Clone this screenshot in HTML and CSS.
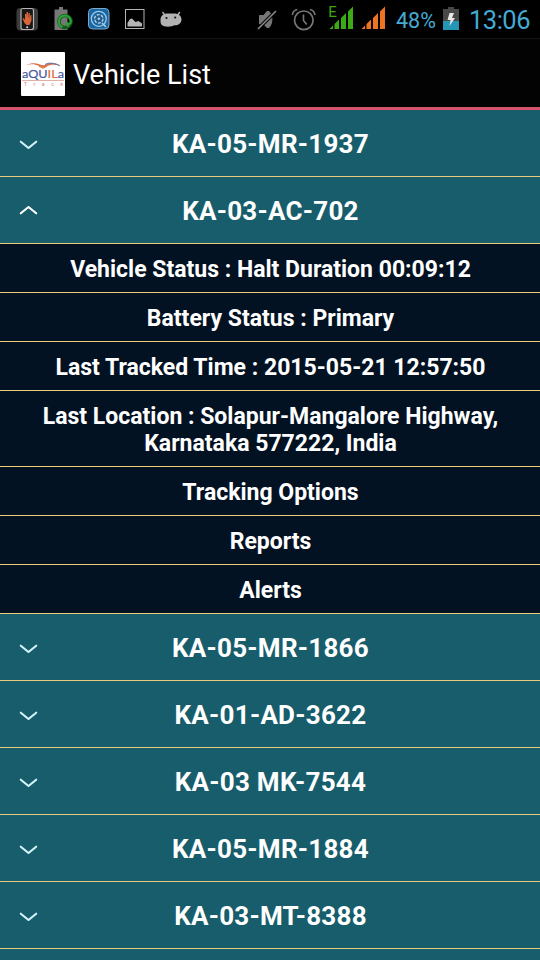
FILE: index.html
```html
<!DOCTYPE html>
<html lang="en">
<head>
<meta charset="utf-8">
<title>Vehicle List</title>
<link rel="stylesheet" href="styles.css">
</head>
<body>
<svg class="defs" width="0" height="0"><defs>
<symbol id="down" viewBox="0 0 20 12"><path d="M2.800 2.700 10.500 9l7.700-6.300" fill="none" stroke="currentColor" stroke-width="2.100" stroke-linecap="round" stroke-linejoin="round"/></symbol>
</defs></svg>
<div class="status">
  <svg class="icons" width="190" height="38" viewBox="0 0 190 38">
    <rect x="16.500" y="8" width="21.500" height="22.500" rx="4" fill="#3c3c3c"/>
    <rect x="21" y="8.500" width="12.500" height="21" rx="2" fill="#181818" stroke="#b5b5b5" stroke-width="1.200"/>
    <path d="M24.500 23 22.500 18.500l1-.5 1.500 2v-6h1.300v4l.3-6h1.400v6l.6-5h1.300l-.2 5.500.8-3.500h1v5.500l-2 4.500h-3z" fill="#d76538"/>
    <circle cx="27.200" cy="27.200" r="1" fill="#ddd"/>
    <path d="M59 7h4v2.500h4.500v20.500h-13V9.500H59z" fill="#777"/>
    <circle cx="65" cy="21.500" r="6" fill="none" stroke="#125c1b" stroke-width="3.500"/>
    <path d="M62.500 27a6 6 0 1 1 8-3.500" fill="none" stroke="#2ba637" stroke-width="2"/>
    <path d="m65.500 22 2 5.500 3.500-4.500z" fill="#28a535"/>
    <rect x="88.500" y="8.500" width="20.500" height="20.500" rx="4" fill="#1767a5" stroke="#7da7c8"/>
    <circle cx="98.800" cy="18.800" r="7.500" fill="none" stroke="#a1c7df" stroke-width="1.300"/>
    <circle cx="98.800" cy="18.800" r="4.200" fill="#285b8b" stroke="#b5d1df" stroke-width="1.300" stroke-dasharray="3 1.300"/>
    <circle cx="98.800" cy="18.800" r="1.300" fill="#9dd3e7"/>
    <path d="m102 23 4 4" stroke="#add1e6" stroke-width="1.500"/>
    <rect x="125.500" y="9.500" width="18.500" height="19" fill="none" stroke="#b5b5b5"/>
    <path d="M127.500 26.500v-3.500l2.500-4 2-.5 3.500 3.500 3-1 3.500 2.500v3z" fill="#b5b5b5"/>
    <path d="m162.500 12 2.300 3M179.800 12l-2 3" stroke="#b2b2b2" stroke-width="1.400"/>
    <path d="M160.500 20c0-4 3-7 7-6.500h7.500c4 0 6.500 3 6.500 6 0 4-3.500 6-7 5.800-3 2-11 2-13-.5-1-1.300-1-3-1-4.800z" fill="#b2b2b2"/>
    <circle cx="166.500" cy="18" r="1.100" fill="#111"/><circle cx="175.200" cy="17.500" r="1.100" fill="#111"/>
  </svg>
  <svg class="icons signal" width="140" height="38" viewBox="250 0 140 38">
    <path d="M259.500 15.500h4l4-4.500v17l-4-4h-4zM268.500 11c4.500 4 4.500 13 0 17z" fill="#777" stroke="#777" stroke-width="1"/>
    <path d="m258 29 18-18" stroke="#000" stroke-width="3.500"/><path d="m258 29 18-18" stroke="#8a8a8a" stroke-width="1.600"/>
    <circle cx="303.800" cy="20.300" r="9.300" fill="none" stroke="#777" stroke-width="1.700"/>
    <path d="M303.500 14.500v6l3.200 4M292.300 15c.5-3 2.500-5 5-5.500M315 15c-.5-3-2.500-5-5-5.500" fill="none" stroke="#777" stroke-width="1.600"/>
    <text class="edge" x="328.300" y="17">E</text>
    <path d="M329.500 29h3.500v-3.500zM334.500 29h4.500v-9.500l-4.500 4.500zM341 29h5V13l-5 5zM348 29h5V6.500l-5 5z" fill="#3caa17"/>
    <path d="M361.500 29h3.500v-3.500zM366.500 29h4.500v-9.500l-4.500 4.500zM373 29h5V13l-5 5zM380 29h5V6.500l-5 5z" fill="#ee7424"/>
  </svg>
  <span class="percent">48%</span>
  <svg class="icons battery" width="18" height="38" viewBox="442 0 18 38">
    <path d="M448 7h6v2h5v21h-16V9h5z" fill="#484848"/><path d="M443 21h16v9h-16z" fill="#2596b6"/>
    <path d="m449.500 13-2 7h3l-1 6 5.500-8h-3l2-5z" fill="#e8e8e8"/>
  </svg>
  <span class="clock">13:06</span>
</div>
<header class="bar">
  <svg class="logo" width="44" height="44" viewBox="0 0 44 44">
    <rect width="44" height="44" rx="1" fill="#fff"/>
    <path d="M5 13c5-2 9-2.500 14-.5 2 1 4 1 6 0 4-2 9-2 14 1-6-1.500-10-1-14 1-3 1.500-5 1-7-.5-4-2-8-2-13-1z" fill="#d8704f"/>
    <path d="M24 12.500c4-2 9-2 15 1.500" fill="none" stroke="#6572a9" stroke-width="1"/>
    <path d="m18 14 4 2 4-2" fill="none" stroke="#e08055" stroke-width="1.500"/>
    <text class="brand" x="1" y="26" textLength="42" lengthAdjust="spacingAndGlyphs">aQU<tspan class="accent">IL</tspan>a</text>
    <path d="M1 28.500h42" stroke="#d99a92" stroke-width=".8"/>
    <text class="track" x="3" y="34" textLength="39">Track</text>
  </svg>
  <h1>Vehicle List</h1>
</header>
<main>
  <div class="row"><svg class="arrow"><use href="#down"/></svg><span>KA-05-MR-1937</span></div>
  <div class="row"><svg class="arrow up"><use href="#down"/></svg><span>KA-03-AC-702</span></div>
  <div class="item"><span>Vehicle Status : Halt Duration 00:09:12</span></div>
  <div class="item"><span>Battery Status : Primary</span></div>
  <div class="item"><span>Last Tracked Time : 2015-05-21 12:57:50</span></div>
  <div class="item"><span>Last Location : Solapur-Mangalore Highway,<br>Karnataka 577222, India</span></div>
  <div class="item"><span>Tracking Options</span></div>
  <div class="item"><span>Reports</span></div>
  <div class="item"><span>Alerts</span></div>
  <div class="row"><svg class="arrow"><use href="#down"/></svg><span>KA-05-MR-1866</span></div>
  <div class="row"><svg class="arrow"><use href="#down"/></svg><span>KA-01-AD-3622</span></div>
  <div class="row"><svg class="arrow"><use href="#down"/></svg><span>KA-03 MK-7544</span></div>
  <div class="row"><svg class="arrow"><use href="#down"/></svg><span>KA-05-MR-1884</span></div>
  <div class="row"><svg class="arrow"><use href="#down"/></svg><span>KA-03-MT-8388</span></div>
</main>
</body>
</html>
```
FILE: styles.css
```css
* { box-sizing: border-box; }
body {
  margin: 0;
  width: 540px;
  height: 960px;
  overflow: hidden;
  background: #175d6c;
  color: #fff;
  font-family: Roboto, sans-serif;
}
.defs { display: none; }
.status {
  display: flex;
  height: 38px;
  background: #000;
  color: #44abd3;
}
.icons { flex: none; }
.signal { margin-left: 60px; }
.edge { font: 15px Roboto, sans-serif; fill: #3ca510; }
.percent {
  width: 52px;
  padding-left: 6px;
  font-size: 21.5px;
  line-height: 41px;
}
.clock {
  padding-left: 9px;
  font-size: 25.500px;
  line-height: 40px;
  letter-spacing: -0.5px;
  white-space: nowrap;
}
.bar {
  display: flex;
  align-items: center;
  height: 72px;
  padding-left: 21px;
  gap: 8px;
  background: #030303;
  border-top: 1px solid #151515;
  border-bottom: 3px solid #d6526d;
}
h1 {
  margin: 0;
  padding-top: 3px;
  font-size: 27px;
  font-weight: 400;
  line-height: 32px;
}
.logo { margin-top: 1px; }
.brand { font: 12px Lato, sans-serif; fill: #4858a0; stroke: #4858a0; stroke-width: 0.2; }
.accent { fill: #e06b3f; stroke: #e06b3f; }
.track { font: 5px Roboto, sans-serif; fill: #d8776e; }
.row {
  display: grid;
  grid-template-columns: 18px 20px 1fr 37px;
  align-items: center;
  height: 67px;
  padding-top: 2px;
  border-bottom: 1px solid #e9cd7c;
  font-size: 26px;
  font-weight: 700;
  letter-spacing: 0.25px;
  text-align: center;
}
.arrow { grid-column: 2; width: 20px; height: 12px; margin-top: 1px; color: #d5f5fa; }
.up { margin-top: -2px; transform: scaleY(-1); color: #fff; }
.row span { grid-column: 3; }
.item {
  padding: 12px 0 9px 1px;
  border-bottom: 1px solid #e9cd7c;
  background: #031222;
  font-size: 23px;
  font-weight: 700;
  line-height: 27px;
  text-align: center;
}
```
